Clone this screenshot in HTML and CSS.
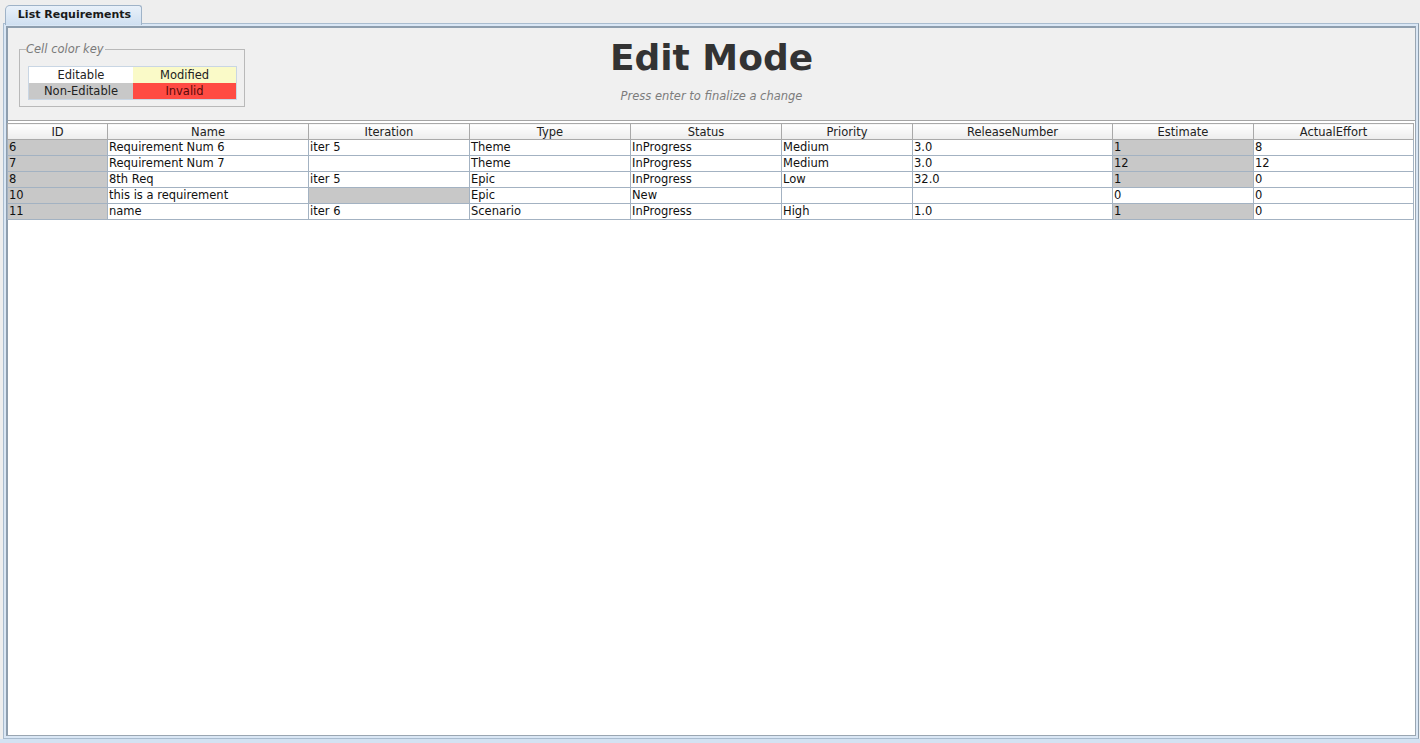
FILE: index.html
```html
<!DOCTYPE html>
<html>
<head>
<meta charset="utf-8">
<link rel="stylesheet" href="styles.css">
</head>
<body>
<div class="window">
  <div class="tabbar">
    <div class="tab">List Requirements</div>
  </div>
  <div class="pane">
    <div class="panel">
      <div class="top">
        <fieldset class="key">
          <legend>Cell color key</legend>
          <div class="keygrid">
            <div class="kc editable">Editable</div>
            <div class="kc modified">Modified</div>
            <div class="kc noneditable">Non-Editable</div>
            <div class="kc invalid">Invalid</div>
          </div>
        </fieldset>
        <div class="title">
          <h1>Edit Mode</h1>
          <p>Press enter to finalize a change</p>
        </div>
        <div class="spacer"></div>
      </div>
      <div class="scroll">
        <table class="grid">
          <colgroup>
            <col class="c-id"><col class="c-name"><col class="c-iter"><col class="c-type"><col class="c-status"><col class="c-prio"><col class="c-rel"><col class="c-est"><col class="c-act">
          </colgroup>
          <thead>
            <tr><th>ID</th><th>Name</th><th>Iteration</th><th>Type</th><th>Status</th><th>Priority</th><th>ReleaseNumber</th><th>Estimate</th><th>ActualEffort</th></tr>
          </thead>
          <tbody>
            <tr><td class="ro">6</td><td>Requirement Num 6</td><td>iter 5</td><td>Theme</td><td>InProgress</td><td>Medium</td><td>3.0</td><td class="ro">1</td><td>8</td></tr>
            <tr><td class="ro">7</td><td>Requirement Num 7</td><td></td><td>Theme</td><td>InProgress</td><td>Medium</td><td>3.0</td><td class="ro">12</td><td>12</td></tr>
            <tr><td class="ro">8</td><td>8th Req</td><td>iter 5</td><td>Epic</td><td>InProgress</td><td>Low</td><td>32.0</td><td class="ro">1</td><td>0</td></tr>
            <tr><td class="ro">10</td><td>this is a requirement</td><td class="ro"></td><td>Epic</td><td>New</td><td></td><td></td><td>0</td><td>0</td></tr>
            <tr><td class="ro">11</td><td>name</td><td>iter 6</td><td>Scenario</td><td>InProgress</td><td>High</td><td>1.0</td><td class="ro">1</td><td>0</td></tr>
          </tbody>
        </table>
      </div>
    </div>
  </div>
  <div class="band"></div>
</div>
</body>
</html>
```

FILE: styles.css
```css
* { box-sizing: border-box; }
html, body { margin: 0; padding: 0; }
body {
  background: #eeeeee;
  font-family: "DejaVu Sans", "Liberation Sans", sans-serif;
  font-size: 11.5px;
  color: #111;
  width: 1420px;
  height: 743px;
  overflow: hidden;
}
.window {
  display: flex;
  flex-direction: column;
  height: 743px;
}
.tabbar {
  height: 24px;
  padding: 5px 0 0 5px;
  flex: none;
  position: relative;
  z-index: 1;
}
.tab {
  width: 137px;
  height: 20px;
  border: 1px solid #9fb3c8;
  border-bottom: none;
  border-radius: 5px 3px 0 0;
  background: linear-gradient(#e9f1fa, #cfdff0);
  font-weight: bold;
  font-size: 11px;
  color: #1a1a1a;
  text-align: center;
  line-height: 18px;
  padding-left: 2px;
}
.pane {
  flex: 1;
  margin: -1px 1px 0 3px;
  border: 1px solid #a9bccf;
  border-right-color: #8d9dad;
  padding: 2px;
  background: #dae7f5;
  display: flex;
  min-height: 0;
}
.panel {
  flex: 1;
  display: flex;
  flex-direction: column;
  border-top: 2px solid #8e9eae;
  border-left: 2px solid #8e9eae;
  border-right: 1px solid #9aa6b2;
  border-bottom: 1px solid #9aa6b2;
  background: #f0f0f0;
  min-height: 0;
}
.top {
  height: 92px;
  flex: none;
  display: grid;
  grid-template-columns: 1fr auto 1fr;
  align-items: start;
}
.key {
  margin: 15px 0 0 11px;
  padding: 11px 7px 6px 8px;
  width: 225px;
  border: 1px solid #b9b9b9;
  border-radius: 0;
}
.key legend {
  font-style: italic;
  color: #7a7a7a;
  padding: 0 1px 0 0;
  margin-left: -2px;
  line-height: 12px;
}
.keygrid {
  display: grid;
  grid-template-columns: 104px 103px;
  grid-auto-rows: 16px;
  border: 1px solid #c9d6e4;
}
.kc {
  text-align: center;
  line-height: 16px;
  color: #222;
}
.editable { background: #ffffff; }
.modified { background: #fafac8; }
.noneditable { background: #c8c8c8; }
.invalid { background: #ff4b43; color: #5a0a0a; }
.title {
  text-align: center;
  padding-top: 6px;
}
.title h1 {
  margin: 0;
  font-size: 36px;
  font-weight: bold;
  color: #333333;
  line-height: 48px;
}
.title p {
  margin: 7px 0 0;
  font-style: italic;
  color: #7c7c7c;
  line-height: 14px;
}
.scroll {
  flex: 1;
  background: #ffffff;
  border-top: 1px solid #a4a4a4;
  padding-top: 2px;
  min-height: 0;
}
.grid {
  border-collapse: collapse;
  table-layout: fixed;
  width: 1406px;
  margin-left: -1px;
}
.c-id { width: 100px; }
.c-name { width: 201px; }
.c-iter { width: 161px; }
.c-type { width: 161px; }
.c-status { width: 151px; }
.c-prio { width: 131px; }
.c-rel { width: 200px; }
.c-est { width: 141px; }
.c-act { width: 160px; }
.grid th {
  height: 16px;
  padding: 0;
  font-weight: normal;
  text-align: center;
  color: #222;
  background: linear-gradient(#ffffff, #ececec);
  border: 1px solid #a9a9a9;
  line-height: 14px;
}
.grid td {
  height: 16px;
  padding: 0 0 1px 1px;
  line-height: 13px;
  border: 1px solid #a3b2c2;
  white-space: nowrap;
  overflow: hidden;
}
.grid td.ro { background: #c8c8c8; }
.band {
  height: 4px;
  flex: none;
  background: #d3e2f2;
}
```
